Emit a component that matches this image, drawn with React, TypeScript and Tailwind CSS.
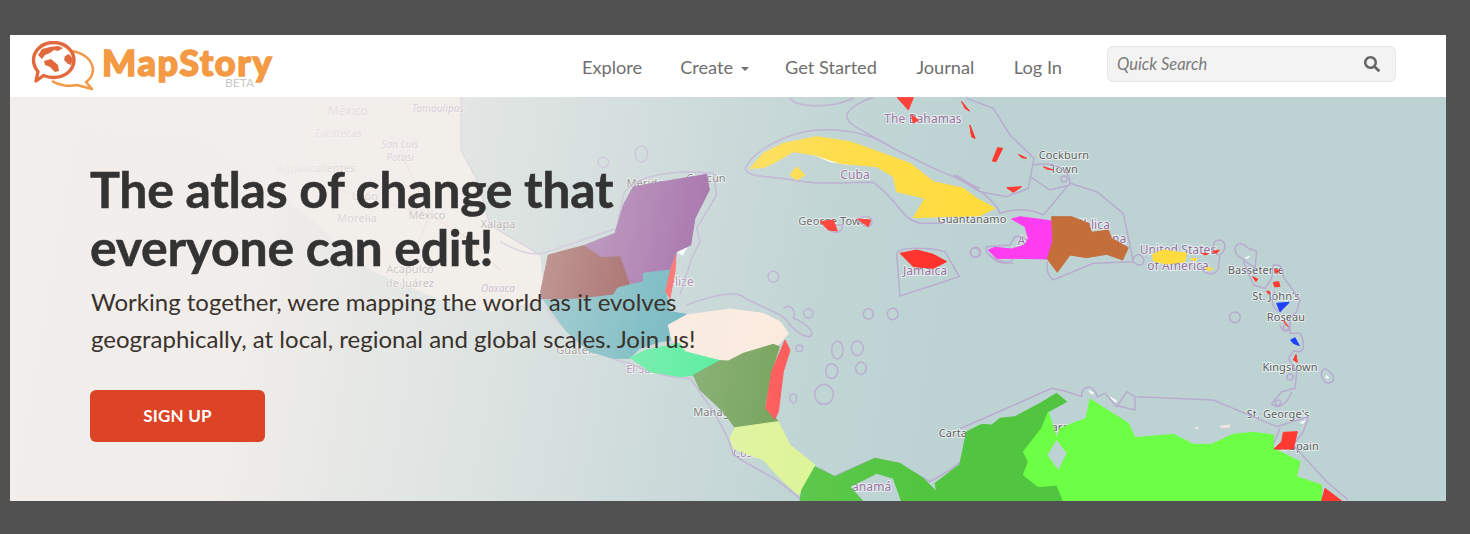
import { FaSearch } from 'react-icons/fa';

const navLinks = ['Get Started', 'Journal', 'Log In'];

const sea = '#bdd3d3';

// shapes traced at 3x: [fill, points]
const westShapes: [string, string][] = [
  ['#ffffff', '940,178 1000,188 1045,208 990,200'],
  ['#ffffff', '530,470 560,458 548,480'],
  ['#ffdc3e', '750,220 790,175 850,145 950,125 1050,140 1120,165 1230,205 1300,260 1390,280 1430,310 1485,340 1440,362 1330,365 1240,368 1275,310 1190,290 1180,245 1130,215 1020,205 945,180 880,170 820,205 790,218'],
  ['#ffdc3e', '870,240 890,215 915,240 890,255'],
  ['#ff3a30', '960,380 1000,375 1012,408 985,405'],
  ['#ff3a30', '1072,372 1112,375 1105,395'],
  ['#ff3028', '1200,475 1250,465 1300,478 1340,500 1300,520 1240,515'],
  ['#ff3a30', '1192,8 1240,8 1225,45'],
  ['#ff3a30', '1235,60 1255,75 1240,85'],
  ['#ff3a30', '1385,20 1408,48 1398,40'],
  ['#ff3a30', '1410,92 1425,130 1415,125'],
  ['#8f4f98', '400,275 620,238 628,285 600,340 585,370 572,450 530,470 510,525 430,535 430,560 390,575 360,485 305,488 250,452 345,415 370,330'],
  ['#832f2d', '145,480 250,452 305,488 360,485 390,575 350,580 340,600 240,612 125,612 122,590'],
  ['#4ca8b4', '130,615 240,612 340,600 355,578 430,560 430,535 510,525 497,590 510,650 560,658 505,690 515,735 480,740 420,760 390,790 340,790 270,770 200,710'],
  ['#ff4848', '528,480 525,530 510,610 497,590 510,530'],
  ['#fdebde', '505,690 560,660 690,642 790,655 840,680 865,715 835,750 730,775 685,798 640,790 555,770 515,735'],
  ['#38ee8f', '390,788 440,765 540,745 555,770 660,797 590,840 540,845 450,830'],
  ['#699d4f', '580,840 660,797 685,798 730,775 820,748 838,755 815,830 795,930 835,980 780,992 705,998 670,950 600,885'],
  ['#ff4c4c', '855,735 870,765 850,830 835,950 825,972 797,940 815,830'],
  ['#ddf594', '705,998 835,980 870,1050 945,1110 905,1185 895,1200 840,1150 790,1095 700,1060 690,1030'],
  ['#52c540', '945,1115 1005,1145 1125,1090 1200,1105 1270,1150 1310,1190 1305,1165 1390,1100 1400,1040 1440,990 1440,1220 1205,1220 1180,1150 1130,1135 1050,1175 1090,1220 900,1220 905,1185'],
];

const eastShapes: [string, string][] = [
  ['#f4e4e4', '780,994 810,990 808,996 784,998'],
  ['#f4e4e4', '704,998 716,999 710,1002'],
  ['#ffffff', '1020,983 1036,977 1030,985'],
  ['#ffffff', '1098,842 1106,848 1100,850'],
  ['#ffffff', '857,488 868,484 862,490'],
  ['#ffffff', '452,907 470,918 465,921'],
  ['#ffffff', '387,887 402,895 395,897'],
  ['#52c540', '0,1105 20,1010 65,988 95,990 120,970 165,965 240,925 290,895 320,920 265,950 245,1000 190,1070 205,1100 190,1140 235,1175 290,1170 310,1218 0,1218'],
  ['#6cff45', '265,950 290,1030 300,1000 378,970 390,912 505,985 525,1028 640,1018 700,1048 755,1048 820,1018 880,1012 940,1020 940,1060 1020,1100 1010,1145 1085,1170 1085,1218 310,1218 290,1170 235,1175 190,1140 205,1100 190,1070 245,1000'],
  ['#ff3a30', '1095,1180 1145,1218 1085,1218'],
  ['#ff3a30', '970,1012 1012,1010 1000,1062 942,1062 965,1040'],
  ['#ff3cf0', '155,372 180,365 275,378 278,440 262,492 175,490 110,490 85,465 105,457 155,462 195,450 205,430 195,395'],
  ['#c46e3c', '275,365 335,365 385,385 395,412 445,405 455,430 505,458 488,495 440,478 380,488 330,480 292,532 262,492 278,440'],
  ['#ffdc3e', '578,478 610,465 680,475 675,500 620,507 580,498'],
  ['#ffdc3e', '690,492 712,490 705,498'],
  ['#ffdc3e', '738,518 760,520 745,528'],
  ['#ff3a30', '5,20 28,48 15,40'],
  ['#ff3a30', '30,90 45,130 35,125'],
  ['#ff3a30', '113,158 128,160 108,200 97,198'],
  ['#ff3a30', '175,178 200,190 185,188'],
  ['#ff3a30', '250,215 280,225 260,222'],
  ['#ff3a30', '140,278 185,275 160,292'],
  ['#ff3a30', '725,475 745,476 735,480'],
  ['#ff3a30', '755,470 778,465 770,475'],
  ['#ff3a30', '878,545 893,552 888,560'],
  ['#ff3a30', '944,524 958,526 950,536'],
  ['#ff3a30', '940,562 956,560 960,574 944,576'],
  ['#ff3a30', '920,588 930,590 926,598'],
  ['#2040ff', '950,625 988,622 960,650'],
  ['#2040ff', '992,735 1005,728 1018,752 1000,745'],
  ['#ff3a30', '970,675 985,695 975,685'],
  ['#ff3a30', '1000,795 1008,778 1012,802'],
];

const westBorders = [
  'M735,220 C760,170 850,115 950,105 C1050,100 1120,120 1180,160 L1290,215 L1440,280',
  'M735,220 C745,250 800,240 880,255 C950,270 1020,262 1120,262 C1200,320 1200,370 1260,385 L1330,385',
  'M1040,60 C1050,30 1110,10 1120,8 M1040,60 C1040,90 1080,100 1180,160',
  'M870,8 C880,40 1010,40 1060,8',
  'M1190,480 C1190,450 1300,460 1335,470 L1378,545 L1200,603 Z',
  'M560,630 C610,610 680,590 720,600 C780,640 850,650 870,690',
  'M0,440 C40,460 90,490 145,470 L350,400 L370,300 C390,250 500,220 640,235 L650,300 L590,400 L600,440 L575,490 L540,600',
  'M130,630 C200,720 300,790 390,805 C470,840 520,850 570,850 C620,920 680,1000 700,1080 C780,1130 830,1150 850,1170 L900,1210',
  'M960,1120 L1000,1145 L1125,1090 L1200,1110 L1290,1160 C1340,1130 1400,1110 1440,1010',
  'M985,390 C985,420 1030,420 1028,390 Z',
  'M1075,375 C1090,360 1120,360 1115,385 C1110,400 1085,395 1075,375',
  'M850,640 C870,620 890,650 880,670 C910,680 950,710 930,725 C900,725 880,700 870,690',
];

const westRings: [number, number, number, number][] = [
  [820, 545, 16, 16], [1105, 657, 15, 16], [1178, 657, 16, 17], [925, 655, 14, 14], [898, 760, 10, 10],
  [310, 202, 16, 15], [424, 177, 19, 24], [1012, 765, 17, 27], [1072, 760, 18, 22], [995, 828, 18, 22],
  [1083, 820, 16, 18], [880, 910, 10, 14], [972, 898, 28, 30], [1425, 473, 14, 14],
];

const eastBorders = [
  'M20,10 L100,40 L150,120 L222,190 L205,280 L140,305 L60,290 L-20,240',
  'M222,210 C280,200 330,220 330,265 L250,360 M210,245 L270,285 L330,270',
  'M-10,240 C50,280 110,320 120,355 C150,345 200,335 250,360',
  'M330,265 L410,290 L490,355 L520,500 L400,505 L280,555 C260,540 260,520 262,500',
  'M160,505 C110,500 70,480 80,455 L150,450 L165,425 C180,420 200,430 210,445',
  'M90,480 C110,510 150,510 160,490',
  'M535,478 C505,490 520,510 545,510 C555,500 555,485 535,478',
  'M725,510 C720,540 770,545 775,520 L780,480 C800,465 800,435 775,435 C755,440 755,470 775,480',
  'M840,445 C815,455 825,480 845,490 L885,520 L890,470 C880,460 860,465 855,450 Z',
  'M850,500 L880,570 L915,580 L935,550 L940,510 C960,505 970,520 970,545 L1020,615 L1010,650 L990,670 L990,715 L1020,715 C1035,740 1035,770 1015,770 L1000,768 L985,790 L1010,830 L1005,880 L965,890 L935,925 C950,945 980,930 995,890',
  'M945,590 C930,610 935,650 965,650 M960,690 C965,710 985,715 990,700',
  'M1095,820 C1075,830 1085,860 1105,865 C1125,860 1130,840 1095,820',
  'M0,1000 L60,975 L275,880 L315,888 L365,905 C360,875 400,860 412,905 L435,895 L470,935 L500,890 L525,905 L525,945 L465,930 M530,905 L760,915 L950,995 L1045,965 L1030,1010 L1000,1050 L1100,1160 L1165,1215',
  'M960,1000 L935,1060',
];

const eastRings: [number, number, number, number][] = [
  [47, 472, 15, 15], [825, 667, 16, 16], [954, 923, 8, 8], [312, 252, 9, 9], [990, 846, 9, 9], [978, 697, 8, 8],
];

// city and country names sitting under the coloured shapes
const mapLabels: [string, number, number, string, number, boolean?][] = [
  ['The Bahamas', 923, 123, '#96709e', 12],
  ['Cuba', 855, 179, '#96709e', 12],
  ['Cockburn', 1064, 159, '#5f5f5f', 11],
  ['Town', 1064, 173, '#5f5f5f', 11],
  ['George Town', 833, 225, '#5f5f5f', 11],
  ['Guantánamo', 972, 223, '#5f5f5f', 11],
  ['Jamaica', 925, 275, '#96709e', 12],
  ['República', 1082, 229, '#96709e', 12],
  ['Dominicana', 1092, 243, '#96709e', 12],
  ['Ayiti', 1030, 245, '#96709e', 12],
  ['United States', 1178, 254, '#96709e', 12],
  ['of America', 1178, 270, '#96709e', 12],
  ['Basseterre', 1256, 274, '#5f5f5f', 11],
  ['St. John\'s', 1276, 300, '#5f5f5f', 11],
  ['Roseau', 1286, 321, '#5f5f5f', 11],
  ['Kingstown', 1290, 371, '#5f5f5f', 11],
  ['St. George\'s', 1278, 418, '#5f5f5f', 11],
  ['Port of Spain', 1285, 450, '#5f5f5f', 11],
  ['Cartagena', 966, 437, '#5f5f5f', 11],
  ['Caracas', 1065, 431, '#5f5f5f', 11],
  ['Mérida', 645, 187, '#5f5f5f', 11],
  ['Cancún', 706, 182, '#5f5f5f', 11],
  ['Belize', 677, 286, '#96709e', 12],
  ['Guatemala', 585, 354, '#5f5f5f', 11],
  ['El Salvador', 655, 373, '#96709e', 11],
  ['Managua', 718, 416, '#5f5f5f', 11],
  ['Costa Rica', 760, 457, '#96709e', 11],
  ['Panamá', 868, 491, '#96709e', 12],
  ['México', 348, 115, '#96709e', 12],
  ['Tamaulipas', 438, 112, '#96709e', 10, true],
  ['Zacatecas', 338, 137, '#96709e', 10],
  ['San Luis', 400, 148, '#96709e', 10, true],
  ['Potosí', 400, 161, '#96709e', 10, true],
  ['Aguascalientes', 316, 172, '#5f5f5f', 11],
  ['León', 365, 200, '#5f5f5f', 11],
  ['México', 427, 219, '#5f5f5f', 11],
  ['Morelia', 357, 222, '#5f5f5f', 11],
  ['Xalapa', 498, 228, '#5f5f5f', 11],
  ['Acapulco', 410, 273, '#5f5f5f', 11],
  ['de Juárez', 410, 287, '#5f5f5f', 11],
  ['Oaxaca', 498, 292, '#96709e', 10, true],
];

const Shapes = ({ items }: { items: [string, string][] }) => (
  <>
    {items.map(([fill, points]) => (
      <polygon key={points} fill={fill} stroke={fill} strokeWidth="3" strokeLinejoin="round" points={points} />
    ))}
  </>
);

const MapDrawing = () => (
  <svg viewBox="10 97 1436 404" className="absolute inset-0 h-full w-full">
    <polygon
      fill="#f2efe9"
      points="10,97 461,97 461,150 477,180 490,225 540,255 545,300 490,312 440,300 370,270 300,210 200,140 10,120"
    />
    <path d="M461,97 L461,150 L477,180 L490,225 L540,255" fill="none" stroke="#b9abd0" strokeWidth="1.3" />
    <path d="M400,150 L430,215 L470,240 L500,270 M340,190 L430,215 L410,260" fill="none" stroke="#e8a0a0" strokeWidth="0.8" />
    <g fontFamily="'Noto Sans', sans-serif" textAnchor="middle" stroke="#ffffff" strokeOpacity="0.6" strokeWidth="2" className="[paint-order:stroke]">
      {mapLabels.map(([text, x, y, color, size, italic]) => (
        <text key={text + x} x={x} y={y} fill={color} fontSize={size} fontStyle={italic ? 'italic' : 'normal'} letterSpacing="0.1">{text}</text>
      ))}
    </g>
    <g transform="translate(500 95) scale(0.33333)">
      <g fill="none" stroke="#b9abd0" strokeWidth="4.5">
        {westBorders.map((d) => <path key={d} d={d} />)}
        {westRings.map(([cx, cy, rx, ry]) => <ellipse key={cx} cx={cx} cy={cy} rx={rx} ry={ry} />)}
      </g>
      <Shapes items={westShapes} />
    </g>
    <g transform="translate(960 95) scale(0.33333)">
      <g fill="none" stroke="#b9abd0" strokeWidth="4.5">
        {eastBorders.map((d) => <path key={d} d={d} />)}
        {eastRings.map(([cx, cy, rx, ry]) => <ellipse key={cx} cx={cx} cy={cy} rx={rx} ry={ry} />)}
      </g>
      <Shapes items={eastShapes} />
      <polygon fill={sea} points="290,1035 320,1075 295,1125 262,1080" />
    </g>
  </svg>
);

const LogoMark = () => (
  <svg viewBox="31 36 64 50" className="h-[50px] w-[64px] shrink-0">
    <path
      d="M72,46 C84,48 92,55 93,64 C93,71 89,75 86,77 L92,84 L77,80 C68,82 58,80 52,76"
      fill="none"
      stroke="#f39a4a"
      strokeWidth="2.6"
      strokeLinejoin="round"
    />
    <path
      d="M53.5,37.5 C65,37.5 74,45.5 74,55 C74,65 65,72.5 53.5,72.5 C49,72.5 46,71.5 43.5,70.5 L36,76 L38,66.5 C35,63 33.5,59 33.5,55 C33.5,45.5 42,37.5 53.5,37.5 Z"
      fill="#ffffff"
      stroke="#e2693c"
      strokeWidth="3.4"
      strokeLinejoin="round"
    />
    <path
      d="M38,50 L42,44 L50,42 L58,41 L63,43 L58,46 L54,45 L50,48 L45,50 L42,54 Z M44,56 L51,54 L58,60 L59,66 L55,67 L50,62 L45,60 Z M65,51 L69,49 L73,54 L71,60 L68,59 L64,55 Z"
      fill="#e2693c"
    />
  </svg>
);

export default function App() {
  return (
    <div className="h-[534px] bg-[#515151] pl-[10px] pr-[24px] pt-[35px] font-['Lato',sans-serif]">
      <header className="flex h-[62px] items-center bg-white pl-[21px] pr-[50px]">
        <LogoMark />
        <div className="ml-[7px] flex flex-col items-end">
          <span className="h-[36px] text-[36px] font-black leading-[36px] tracking-[1.6px] text-[#f49a45] [-webkit-text-stroke:1.5px_#f49a45]">MapStory</span>
          <span className="mr-[19px] mt-[-3px] text-[12px] leading-[12px] text-[#c9c9c9]">BETA</span>
        </div>
        <nav className="ml-auto flex items-center pt-[4px] text-[18.2px] text-[#6f6f6f]">
          <a>Explore</a>
          <a className="ml-[38px] flex items-center">
            Create
            <span className="ml-[8px] mt-[2px] border-x-[4px] border-t-[4px] border-x-transparent border-t-[#6f6f6f]" />
          </a>
          <div className="ml-[36px] flex gap-[39.5px]">
            {navLinks.map((link) => <a key={link}>{link}</a>)}
          </div>
        </nav>
        <div className="ml-[45px] mt-[-5px] flex h-[36px] w-[289px] items-center justify-between rounded-[6px] border border-[#e6e6e6] bg-[#f3f3f3] pl-[9px] pr-[15px]">
          <span className="pt-[2px] text-[16.5px] italic text-[#7a7a7a]">Quick Search</span>
          <FaSearch className="text-[16px] text-[#666666]" />
        </div>
      </header>
      <section className="relative h-[404px] overflow-hidden bg-[#bdd3d3]">
        <MapDrawing />
        <div className="absolute inset-0 bg-[linear-gradient(100deg,rgba(242,238,235,1)_0%,rgba(242,238,235,0.97)_18%,rgba(242,238,235,0.6)_35%,rgba(242,238,235,0.26)_48%,rgba(242,238,235,0.08)_56%,rgba(242,238,235,0)_65%)]" />
        <div className="relative pl-[80px] pt-[63px]">
          <h1 className="text-[50px] font-bold leading-[58px] tracking-[-0.3px] text-[#333333] [-webkit-text-stroke:0.5px_#333333]">
            The atlas of change that<br />everyone can edit!
          </h1>
          <p className="mt-[7px] pl-[1px] text-[24px] leading-[37px] text-[#3a322d]">
            Working together, were mapping the world as it evolves<br />
            geographically, at local, regional and global scales. Join us!
          </p>
          <button className="mt-[33px] h-[52px] w-[175px] rounded-[6px] bg-[#dc4425] text-[17px] font-bold tracking-[0.2px] text-white">
            SIGN UP
          </button>
        </div>
      </section>
    </div>
  );
}
